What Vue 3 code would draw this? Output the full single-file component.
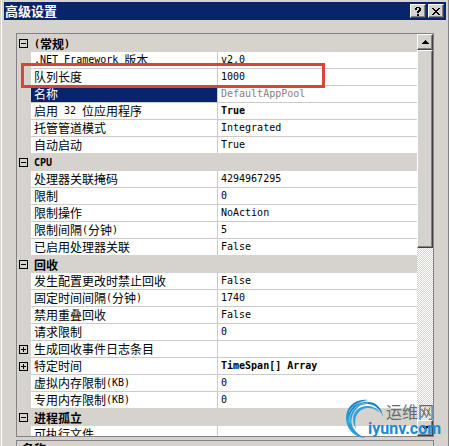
<script setup>
import { ref } from 'vue'

const groups = ref([
  {
    name: '(常规)',
    rows: [
      { name: '.NET Framework 版本', value: 'v2.0' },
      { name: '队列长度', value: '1000', marked: true },
      { name: '名称', value: 'DefaultAppPool', selected: true },
      { name: '启用 32 位应用程序', value: 'True', bold: true },
      { name: '托管管道模式', value: 'Integrated' },
      { name: '自动启动', value: 'True' }
    ]
  },
  {
    name: 'CPU',
    rows: [
      { name: '处理器关联掩码', value: '4294967295' },
      { name: '限制', value: '0' },
      { name: '限制操作', value: 'NoAction' },
      { name: '限制间隔(分钟)', value: '5' },
      { name: '已启用处理器关联', value: 'False' }
    ]
  },
  {
    name: '回收',
    rows: [
      { name: '发生配置更改时禁止回收', value: 'False' },
      { name: '固定时间间隔(分钟)', value: '1740' },
      { name: '禁用重叠回收', value: 'False' },
      { name: '请求限制', value: '0' },
      { name: '生成回收事件日志条目', value: '', expandable: true },
      { name: '特定时间', value: 'TimeSpan[] Array', bold: true, expandable: true },
      { name: '虚拟内存限制(KB)', value: '0' },
      { name: '专用内存限制(KB)', value: '0' }
    ]
  },
  {
    name: '进程孤立',
    rows: [{ name: '可执行文件', value: '' }]
  }
])

// Latin runs are set in a half-width face, so they are split from the Chinese runs.
const runs = (text) =>
  (text.match(/[\x20-\x7e]+|[^\x20-\x7e]+/g) || []).map((t) => ({
    t,
    latin: /^[\x20-\x7e]/.test(t)
  }))
</script>

<template>
  <main class="dialog">
    <header class="titlebar">
      <h1>高级设置</h1>
      <button class="raised tool" type="button" aria-label="Help">
        <svg width="8" height="9" viewBox="0 0 8 9" shape-rendering="crispEdges">
          <path d="M2 0h4v1h1v3h-1v1h-1v1h-2v-2h1v-1h1v-2h-2v2h-2v-2h1zM3 7h2v2h-2z" />
        </svg>
      </button>
      <button class="raised tool" type="button" aria-label="Close">
        <svg width="8" height="7" viewBox="0 0 8 7" shape-rendering="crispEdges">
          <path d="M0 0h2v1h1v1h2v-1h1v-1h2v1h-1v1h-1v1h-1v1h1v1h1v1h1v1h-2v-1h-1v-1h-2v1h-1v1h-2v-1h1v-1h1v-1h1v-1h-1v-1h-1v-1h-1z" />
        </svg>
      </button>
    </header>

    <section class="grid">
      <div class="view">
        <table>
          <colgroup>
            <col class="gutter-col" />
            <col class="name-col" />
            <col />
          </colgroup>
          <tbody v-for="g in groups" :key="g.name">
            <tr class="group">
              <td class="gutter">
                <button class="expander" type="button" :aria-label="g.name">
                  <svg width="9" height="9" viewBox="0 0 9 9" shape-rendering="crispEdges">
                    <path d="M0 0h9v9h-9zM1 1v7h7v-7zM2 4h5v1h-5z" fill-rule="evenodd" />
                  </svg>
                </button>
              </td>
              <th colspan="2" scope="rowgroup">
                <div class="cell">
                  <span v-for="(r, i) in runs(g.name)" :key="i" :class="{ latin: r.latin }">{{ r.t }}</span>
                </div>
              </th>
            </tr>
            <tr v-for="row in g.rows" :key="row.name" :class="{ selected: row.selected }">
              <td class="gutter">
                <button v-if="row.expandable" class="expander" type="button" :aria-label="row.name">
                  <svg width="9" height="9" viewBox="0 0 9 9" shape-rendering="crispEdges">
                    <path d="M0 0h9v9h-9zM1 1v7h7v-7zM2 4h2v-2h1v2h2v1h-2v2h-1v-2h-2z" fill-rule="evenodd" />
                  </svg>
                </button>
              </td>
              <td class="name">
                <div class="cell">
                  <span v-for="(r, i) in runs(row.name)" :key="i" :class="{ latin: r.latin }">{{ r.t }}</span>
                </div>
                <i v-if="row.marked" class="marker"></i>
              </td>
              <td class="value" :class="{ bold: row.bold }">
                <div class="cell">
                  <span class="latin">{{ row.value }}</span>
                </div>
              </td>
            </tr>
          </tbody>
        </table>
      </div>
      <div class="scrollbar">
        <button class="raised arrow" type="button" aria-label="Scroll up">
          <svg width="7" height="4" viewBox="0 0 7 4" shape-rendering="crispEdges">
            <path d="M3 0h1v1h1v1h1v1h1v1h-7v-1h1v-1h1v-1h1z" />
          </svg>
        </button>
        <div class="raised thumb"></div>
        <div class="track"></div>
        <button class="raised arrow" type="button" aria-label="Scroll down">
          <svg width="7" height="4" viewBox="0 0 7 4" shape-rendering="crispEdges">
            <path d="M0 0h7v1h-1v1h-1v1h-1v1h-1v-1h-1v-1h-1v-1h-1z" />
          </svg>
        </button>
      </div>
    </section>

    <section class="description"><h2>名称</h2></section>

    <div class="watermark">
      <svg class="swirl" width="38" height="40" viewBox="0 0 38 40">
        <defs>
          <linearGradient id="swirl" x1="0" y1="1" x2="1" y2="0">
            <stop offset="0" stop-color="#43b5e6" />
            <stop offset="0.5" stop-color="#1687c9" />
            <stop offset="1" stop-color="#1479bd" />
          </linearGradient>
        </defs>
        <path d="M22 1C9-1 0 8 0 19c0 11 8 19 19 20C10 35 5 28 5 20 5 10 11 3 22 1z" fill="url(#swirl)" />
        <path d="M5 26C1 13 10 2 22 3c8 0 14 6 15 15C34 9 28 5 21 5 11 5 5 14 5 26z" fill="url(#swirl)" />
        <path d="M10 30C3 18 10 7 21 7c6 0 10 2 13 7C30 10 26 9 21 9 12 10 7 18 10 30z" fill="#2aa3dc" />
        <path d="M3 13C7 5 14 2 22 2M3 24C3 12 11 4 22 4" fill="none" stroke="#9fdcf5" stroke-width="0.7" />
      </svg>
      <span class="brand">运维网</span>
      <span class="site">iyunv.com</span>
    </div>
  </main>
</template>

<style>
body {
  margin: 0;
  background: #d6d3ce;
}
</style>

<style scoped>
.dialog {
  position: relative;
  box-sizing: border-box;
  height: 100vh;
  overflow: hidden;
  display: flex;
  flex-direction: column;
  padding: 2px 2px 0 2px;
  border-left: 1px solid #d6d3ce;
  border-right: 1px solid #848284;
  box-shadow: inset 1px 0 #fff;
  background: #d6d3ce;
  color: #000;
  font: 12px/16px "Noto Sans CJK SC", sans-serif;
}
button {
  display: flex;
  align-items: center;
  justify-content: center;
  padding: 0;
  border: 0;
  background: none;
}
.raised {
  box-sizing: border-box;
  background: #d6d3ce;
  border: 1px solid;
  border-color: #fff #424142 #424142 #fff;
  box-shadow: inset -1px -1px #848284;
}
.titlebar {
  flex: none;
  display: flex;
  align-items: center;
  gap: 2px;
  height: 18px;
  margin-left: 1px;
  padding: 0 2px 0 1px;
  background: #08246b;
}
h1 {
  flex: 1;
  margin: 0;
  color: #fff;
  font-size: 13px;
  line-height: 18px;
  font-weight: 700;
}
.tool {
  width: 16px;
  height: 14px;
}
.grid {
  flex: 1;
  min-height: 0;
  display: flex;
  margin: 13px 12px 3px 13px;
  border: 1px solid #848284;
}
.view {
  flex: 1;
  min-width: 0;
  overflow: hidden;
  padding-top: 1px;
}
table {
  width: 100%;
  table-layout: fixed;
  border-spacing: 0;
}
.gutter-col {
  width: 14px;
}
.name-col {
  width: 186px;
}
td,
th {
  box-sizing: border-box;
  height: 17px;
  padding: 0;
  text-align: left;
  vertical-align: middle;
  white-space: nowrap;
}
th {
  padding-left: 3px;
  font-weight: 700;
}
.cell {
  display: flex;
  align-items: center;
  height: 16px;
  white-space: pre;
}
.gutter {
  background: #d6d3ce;
}
.expander {
  width: 9px;
  height: 9px;
  margin-left: 2px;
}
.name,
.value {
  background: #fff;
  border-bottom: 1px solid #cecbc6;
}
.name {
  position: relative;
  padding-left: 3px;
}
.value {
  border-left: 1px solid #cecbc6;
  padding-left: 3px;
}
tr:last-child > .name,
tr:last-child > .value {
  border-bottom-color: #d6d3ce;
}
.latin {
  font-family: "DejaVu Sans Mono", monospace;
  font-size: 10px;
}
.bold {
  font-weight: 700;
}
.selected .name {
  background: #08246b;
  color: #fff;
}
.selected .value {
  color: #848284;
}
.marker {
  position: absolute;
  z-index: 1;
  box-sizing: border-box;
  top: -6px;
  left: -10px;
  width: 304px;
  height: 25px;
  border: 3px solid #d9433f;
}
.scrollbar {
  flex: none;
  display: flex;
  flex-direction: column;
  width: 16px;
}
.arrow {
  flex: none;
  width: 16px;
  height: 16px;
}
.thumb {
  flex: 197 1 0;
}
.track {
  flex: 172 1 0;
  background: repeating-conic-gradient(#fff 0 25%, #d6d3ce 0 50%) 0 0 / 2px 2px;
}
.description {
  flex: none;
  box-sizing: border-box;
  height: 6px;
  overflow: hidden;
  margin: 0 12px 0 13px;
  padding: 0 5px;
  border: 1px solid #848284;
  border-bottom: 0;
}
h2 {
  margin: 0;
  font-size: 12px;
  line-height: 16px;
  font-weight: 700;
}
.watermark {
  position: absolute;
  z-index: 2;
  right: 5px;
  bottom: 7px;
  width: 97px;
  height: 40px;
}
.swirl {
  position: absolute;
  left: 0;
  top: 0;
}
.brand {
  position: absolute;
  left: 40px;
  top: 2px;
  color: #66696d;
  font-size: 16px;
  line-height: 20px;
}
.site {
  position: absolute;
  left: 22px;
  top: 20px;
  color: #2187d0;
  font: 700 16px/20px Roboto, sans-serif;
}
</style>
